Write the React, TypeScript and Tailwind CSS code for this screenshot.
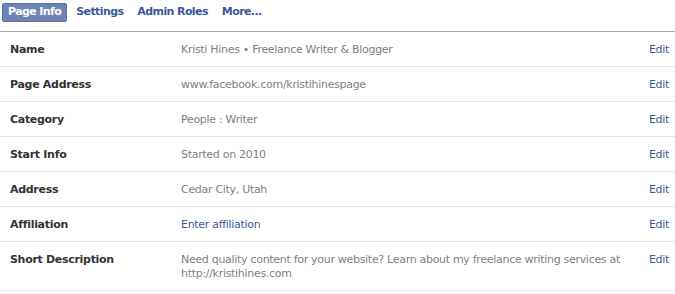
const rows: { label: string; value: string; link?: boolean }[] = [
  { label: 'Name', value: 'Kristi Hines • Freelance Writer & Blogger' },
  { label: 'Page Address', value: 'www.facebook.com/kristihinespage' },
  { label: 'Category', value: 'People : Writer' },
  { label: 'Start Info', value: 'Started on 2010' },
  { label: 'Address', value: 'Cedar City, Utah' },
  { label: 'Affiliation', value: 'Enter affiliation', link: true },
  {
    label: 'Short Description',
    value:
      'Need quality content for your website? Learn about my freelance writing services at http://kristihines.com',
  },
];

const tabs = ['Page Info', 'Settings', 'Admin Roles', 'More...'];

export default function App() {
  return (
    <div className="w-[675px] h-[294px] bg-white text-[11px] tracking-[-0.3px] font-['DejaVu_Sans',sans-serif] overflow-hidden">
      <div className="flex items-start gap-[4px] h-[32px] pl-[2px] pt-[3px] border-b border-[#a5a5a5]">
        {tabs.map((t, i) => (
          <span
            key={t}
            className={
              i === 0
                ? 'h-[19px] px-[5px] flex items-center rounded-[2px] bg-[#6d84b4] border border-[#5973a9] text-white font-bold tracking-[-0.6px]'
                : 'h-[19px] px-[5px] flex items-center text-[#3b5998] font-bold tracking-[-0.6px]'
            }
          >
            {t}
          </span>
        ))}
      </div>
      {rows.map((r) => (
        <div key={r.label} className="flex items-start border-b border-[#e9e9e9] pt-[11px] pb-[9px] min-h-[35px]">
          <div className="w-[181px] pl-[10px] font-bold text-[#333333] leading-[14px] shrink-0">{r.label}</div>
          <div className={`flex-1 leading-[14px] pr-[14px] ${r.link ? 'text-[#3b5998]' : 'text-[#7f7f7f]'}`}>
            {r.value}
          </div>
          <div className="w-[40px] text-right pr-[6px] text-[#3b5998] leading-[14px] shrink-0">Edit</div>
        </div>
      ))}
    </div>
  );
}
